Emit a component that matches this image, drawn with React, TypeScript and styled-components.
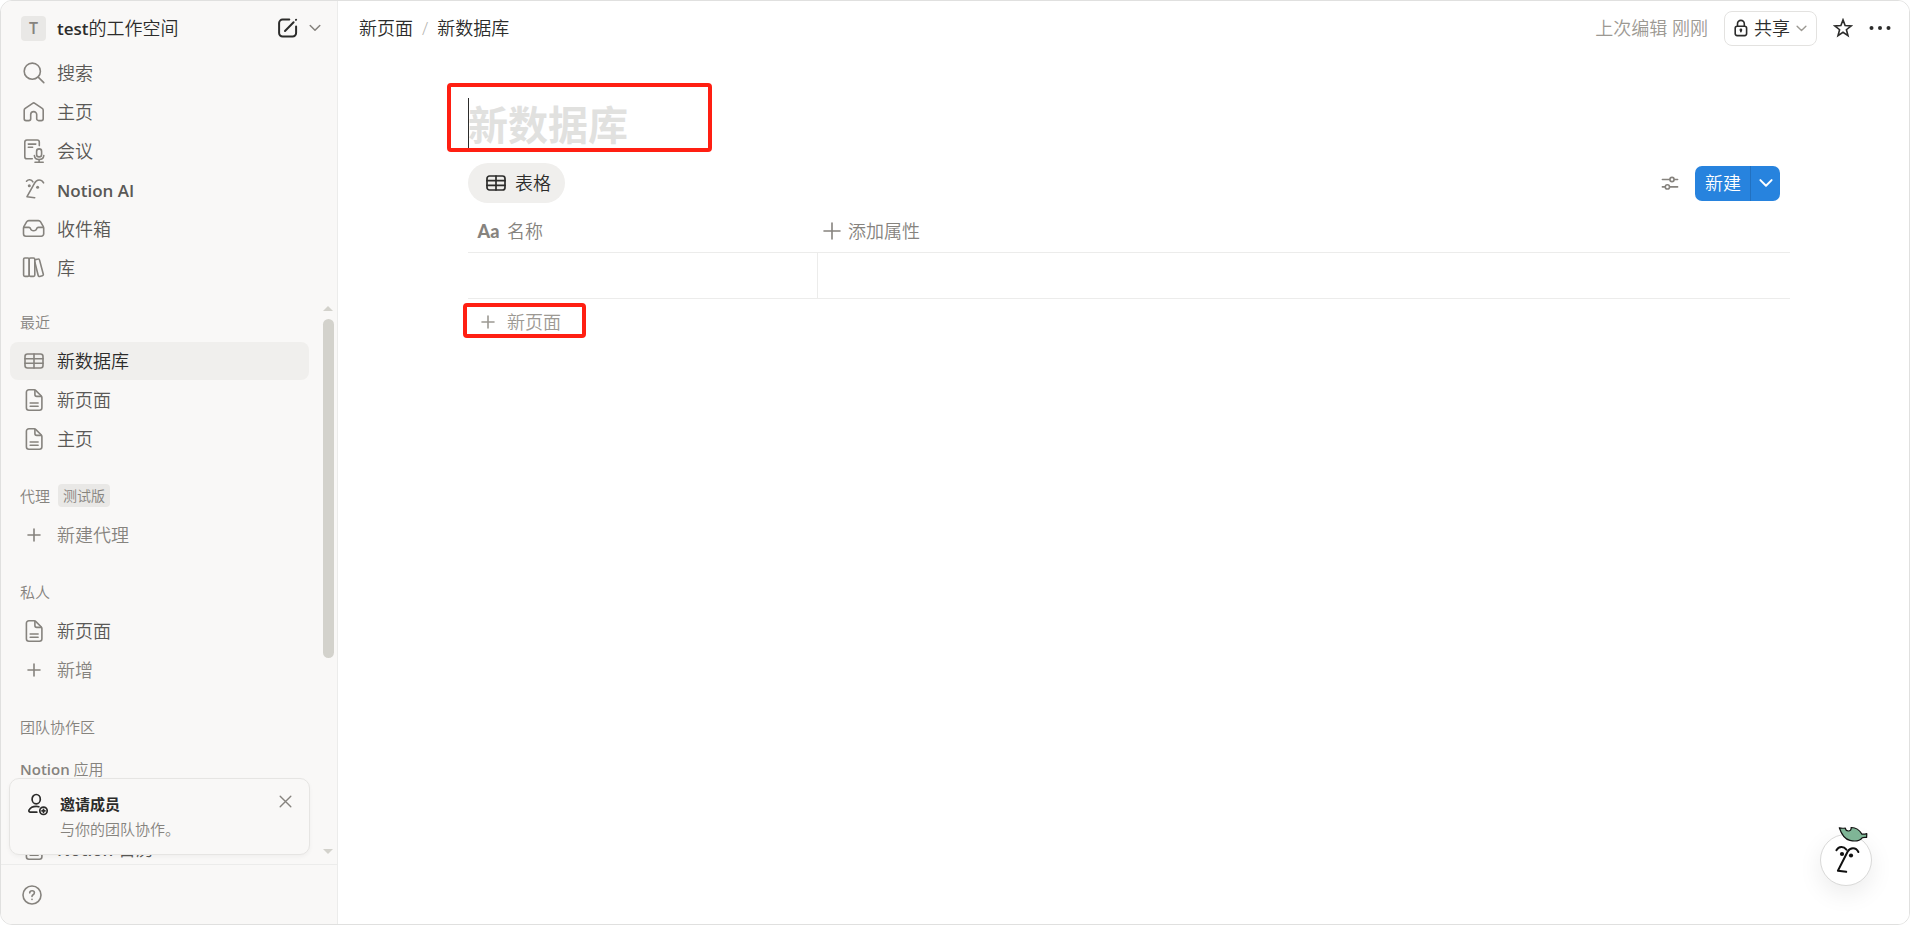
import React from "react";
import styled, { createGlobalStyle, css } from "styled-components";

const color = {
  ink: "#2c2c2b",
  body: "#5a5956",
  muted: "#86837e",
  faint: "#9c9993",
  line: "#ececeb",
  panel: "#f9f8f7",
  blue: "#2783de",
  red: "#ff1f12",
};

const GlobalStyle = createGlobalStyle`
  *, *::before, *::after { box-sizing: border-box; }
  html, body, #root { height: 100%; }
  body {
    margin: 0;
    background: #fff;
    color: ${color.ink};
    font-family: "Open Sans", "Noto Sans CJK SC", sans-serif;
    font-size: 18px;
    font-weight: 350;
    line-height: 24px;
  }
  button, input {
    font: inherit;
    color: inherit;
    border: 0;
    padding: 0;
    margin: 0;
    background: none;
  }
  button { cursor: pointer; }
  a { color: inherit; text-decoration: none; }
  svg { display: block; flex: none; }
`;

/* ---------- icons ---------- */

const Icon = styled.svg.attrs({ "aria-hidden": true })<{ $w?: number }>`
  fill: none;
  stroke: currentColor;
  stroke-width: ${(p) => p.$w ?? 1.6};
  stroke-linecap: round;
  stroke-linejoin: round;
`;

const SearchIcon = () => (
  <Icon width="24" height="24" viewBox="0 0 24 24">
    <circle cx="10.3" cy="10.2" r="8.1" />
    <path d="M16.2 16.2 21.8 21.6" />
  </Icon>
);
const HomeIcon = () => (
  <Icon width="24" height="24" viewBox="0 0 24 24">
    <path d="M2.2 10.3c0-.8.3-1.4 1-1.9l7.4-5.1c.7-.5 1.5-.5 2.2 0l7.4 5.1c.7.5 1 1.1 1 1.9v8.4a1.9 1.9 0 0 1-1.9 1.9h-2.7a1.9 1.9 0 0 1-1.9-1.9v-4.1a3 3 0 0 0-6 0v4.1a1.9 1.9 0 0 1-1.9 1.9H4.1a1.9 1.9 0 0 1-1.9-1.9z" />
  </Icon>
);
const MeetingIcon = () => (
  <Icon width="24" height="24" viewBox="0 0 24 24">
    <path d="M17.3 6.6V3.1a2.1 2.1 0 0 0-2.1-2.1H4.9a2.1 2.1 0 0 0-2.1 2.1v14.6a2.1 2.1 0 0 0 2.1 2.1h5.4M6.3 5.1h7.5M6.3 8.3h4.3" />
    <rect x="14.6" y="9.9" width="5" height="8" rx="2.5" />
    <path d="M12.4 16.6c.3 2.4 2.2 3.9 4.7 3.9s4.4-1.5 4.7-3.9M17.1 20.5v2.7M13 23.2h8.2" />
  </Icon>
);
const FaceIcon = () => (
  <Icon width="24" height="24" viewBox="0 0 24 24">
    <path d="M4.5 3.2c1.8-2.1 5-1.9 6.4.7" />
    <path d="M21.6 4.9c-2.3-3.8-6.8-3.9-9 .2L5 18.7l7.7 1" />
    <g fill="currentColor" stroke="none">
      <circle cx="7.3" cy="7.7" r="1.5" />
      <circle cx="15.6" cy="9.3" r="1.5" />
    </g>
  </Icon>
);
const InboxIcon = () => (
  <Icon width="24" height="24" viewBox="0 0 24 24">
    <path d="M1.5 11.3c0-.7.2-1.3.5-1.9l2.6-4.5c.5-.8 1.2-1.3 2.2-1.3h9.6c1 0 1.7.5 2.2 1.3l2.6 4.5c.3.6.5 1.2.5 1.9v5.5a2.4 2.4 0 0 1-2.4 2.4H3.9a2.4 2.4 0 0 1-2.4-2.4z" />
    <path d="M1.9 10.4h5c.8 0 1.4.4 1.6 1.2.4 1.4 1.5 2.2 3.1 2.2s2.7-.8 3.1-2.2c.2-.8.8-1.2 1.6-1.2h5" />
  </Icon>
);
const LibraryIcon = () => (
  <Icon width="24" height="24" viewBox="0 0 24 24">
    <rect x="1.6" y="2" width="5.6" height="18.4" rx="1.3" />
    <rect x="7.2" y="2" width="5.6" height="18.4" rx="1.3" />
    <path d="M13.3 3.7 16 3a1.2 1.2 0 0 1 1.5.9l3.8 14.3a1.2 1.2 0 0 1-.9 1.5l-2.7.7a1.2 1.2 0 0 1-1.5-.9L12.8 6" />
  </Icon>
);
const TableIcon = ({ w = 1.6 }: { w?: number }) => (
  <Icon $w={w} width="20" height="16" viewBox="0 0 20 16">
    <rect x="1" y="1" width="18" height="14" rx="2.5" />
    <path d="M1 5.7h18M1 10.3h18M10 1v14" />
  </Icon>
);
const PageIcon = () => (
  <Icon width="24" height="24" viewBox="0 0 24 24">
    <path d="M4.4 4.3a2.5 2.5 0 0 1 2.5-2.5h5.2c.7 0 1.3.3 1.8.8l5.2 5.2c.5.5.8 1.1.8 1.8v10.1a2.5 2.5 0 0 1-2.5 2.5H6.9a2.5 2.5 0 0 1-2.5-2.5z" />
    <path d="M12.9 2.3v4.3a1.8 1.8 0 0 0 1.8 1.8h4.4M8.2 15h7.9M8.2 18.3h7.9" />
  </Icon>
);
const PlusIcon = ({ size = 14 }: { size?: number }) => (
  <Icon width={size} height={size} viewBox={`0 0 ${size} ${size}`}>
    <path d={`M${size / 2} 1V${size - 1}M1 ${size / 2}H${size - 1}`} />
  </Icon>
);
const ChevronIcon = ({ size = 12, w = 1.5 }: { size?: number; w?: number }) => (
  <Icon $w={w} width={size} height={size} viewBox="0 0 12 12">
    <path d="M1.2 3.5 6 8.3l4.8-4.8" />
  </Icon>
);
const ComposeIcon = () => (
  <Icon $w={2} width="22" height="22" viewBox="0 0 22 22">
    <path d="M12.3 2.6H5.6a3.5 3.5 0 0 0-3.5 3.5v10a3.5 3.5 0 0 0 3.5 3.5h10a3.5 3.5 0 0 0 3.5-3.5V9.6" />
    <path d="M8 14 16.6 5.3M18.9 2.9l.2-.2" />
  </Icon>
);
const LockIcon = () => (
  <Icon width="14" height="18" viewBox="0 0 14 18">
    <rect x="1.2" y="7.2" width="11.4" height="9.4" rx="2" />
    <path d="M3.5 7.2V4.8a3.4 3.4 0 0 1 6.8 0v2.4M6.9 11.3v1.5" />
    <circle cx="6.9" cy="11" r=".6" />
  </Icon>
);
const StarIcon = () => (
  <Icon $w={1.6} width="20" height="20" viewBox="0 0 20 20">
    <path strokeLinejoin="miter" d="m10 1.9 2.1 5.7 6.1.3-4.8 3.8 1.6 5.9L10 14.3l-5 3.3 1.6-5.9L1.8 7.9l6.1-.3z" />
  </Icon>
);
const DotsIcon = () => (
  <Icon width="22" height="6" viewBox="0 0 22 6">
    <g fill="currentColor" stroke="none">
      <circle cx="2.5" cy="3" r="2" />
      <circle cx="11" cy="3" r="2" />
      <circle cx="19.5" cy="3" r="2" />
    </g>
  </Icon>
);
const SlidersIcon = () => (
  <Icon width="18" height="16" viewBox="0 0 18 16">
    <path d="M1.4 4.5h7.2M13.4 4.5h3.2M1.4 11.9H4M8.8 11.9h7.8" />
    <circle cx="11" cy="4.5" r="2.1" />
    <circle cx="6.4" cy="11.9" r="2.1" />
  </Icon>
);
const CloseIcon = () => (
  <Icon $w={1.4} width="13" height="13" viewBox="0 0 13 13">
    <path d="m1.2 1.2 10.6 10.6M11.8 1.2 1.2 11.8" />
  </Icon>
);
const InviteIcon = () => (
  <Icon $w={1.7} width="22" height="24" viewBox="0 0 22 24">
    <ellipse cx="9.2" cy="7.2" rx="4.1" ry="4.7" />
    <path d="M9.8 20.2H3.4c-1.2 0-1.9-1-1.4-2 1.2-2.3 4-3.8 7.2-3.8 1 0 1.9.1 2.7.4" />
    <circle cx="16.5" cy="18.8" r="3.7" />
    <path d="M16.5 17.3v3M15 18.8h3" />
  </Icon>
);
const HelpIcon = () => (
  <Icon width="20" height="20" viewBox="0 0 20 20">
    <circle cx="10" cy="10" r="9" />
    <path d="M7.7 7.9c.1-1.3 1-2.1 2.4-2.1 1.3 0 2.3.8 2.3 2 0 1-.5 1.5-1.3 2s-1.1.9-1.1 1.7" />
    <path d="M10 14.3v.1" />
  </Icon>
);

/* ---------- shell ---------- */

const Shell = styled.div`
  position: relative;
  display: flex;
  height: 100vh;
  min-height: 600px;
  border: 1px solid #e0e0df;
  border-radius: 12px;
  overflow: hidden;
`;

const Sidebar = styled.aside`
  flex: none;
  position: relative;
  display: flex;
  flex-direction: column;
  width: 337px;
  background: ${color.panel};
  border-right: 1px solid ${color.line};
  color: ${color.body};
`;

const Workspace = styled.div`
  display: flex;
  align-items: center;
  height: 53px;
  padding: 1px 16px 0 20px;
`;

const WorkspaceButton = styled.button`
  display: flex;
  align-items: center;
  gap: 11px;
  flex: 1;
  color: ${color.ink};
`;

const Avatar = styled.span`
  display: grid;
  place-items: center;
  width: 25px;
  height: 25px;
  border-radius: 4px;
  background: #e9e8e6;
  color: ${color.muted};
  font-size: 16px;
  font-weight: 600;
`;

const Latin = styled.span`
  font-size: 17px;
  font-weight: 600;
`;

const IconButton = styled.button<{ $tone?: string }>`
  display: grid;
  place-items: center;
  color: ${(p) => p.$tone ?? color.ink};
`;

const WorkspaceActions = styled.div`
  display: flex;
  align-items: center;
  gap: 10px;
`;

const List = styled.ul`
  display: grid;
  gap: 1px;
  margin: 0;
  padding: 0;
  list-style: none;
`;

const Nav = styled.nav`
  padding: 0 27px 0 9px;
`;

const rowStyle = css`
  display: flex;
  align-items: center;
  gap: 11px;
  width: 100%;
  height: 38px;
  padding: 0 12px;
  border-radius: 8px;
  text-align: left;
`;

const RowLink = styled.a<{ $active?: boolean }>`
  ${rowStyle}
  background: ${(p) => (p.$active ? "#f0efed" : "transparent")};
  color: ${(p) => (p.$active ? color.ink : "inherit")};
`;

const RowButton = styled.button`
  ${rowStyle}
  color: ${color.muted};
`;

const RowIcon = styled.span`
  display: grid;
  place-items: center;
  width: 24px;
  height: 24px;
  color: ${color.muted};
`;

const Scroller = styled.div`
  display: flex;
  flex: 1;
  min-height: 0;
  margin-top: 16px;
`;

const Sections = styled.div`
  display: flex;
  flex: 1;
  flex-direction: column;
  gap: 19px;
  padding-left: 9px;
  overflow: hidden;
`;

const Section = styled.section<{ $tight?: boolean }>`
  flex: none;
  margin-top: ${(p) => (p.$tight ? "-16px" : "0")};
`;

const SectionTitle = styled.h2`
  display: flex;
  align-items: center;
  gap: 8px;
  height: 39px;
  margin: 0;
  padding: 0 10px 2px;
  color: ${color.muted};
  font-size: 15px;
  font-weight: inherit;
`;

const SectionLatin = styled.span`
  font-weight: 600;
`;

const Tag = styled.span`
  padding: 0 5px;
  border-radius: 4px;
  background: #e9e8e6;
  font-size: 14px;
  line-height: 23px;
`;

const CoveredList = styled(List)`
  padding-top: 41px;
`;

const Scrollbar = styled.div`
  display: flex;
  flex: none;
  flex-direction: column;
  align-items: center;
  width: 28px;
  padding: 3px 2px 10px 12px;
`;

const Arrow = styled.span<{ $down?: boolean }>`
  border: 5px solid transparent;
  border-top: ${(p) => (p.$down ? "5px solid #d3d2cc" : "0")};
  border-bottom: ${(p) => (p.$down ? "0" : "5px solid #d3d2cc")};
`;

const Track = styled.div`
  flex: 1;
  width: 11px;
  margin: 8px 0;
`;

const Thumb = styled.div`
  height: 65%;
  border-radius: 6px;
  background: #d3d2cc;
`;

const Footer = styled.div`
  display: flex;
  align-items: center;
  height: 60px;
  padding: 0 21px;
  border-top: 1px solid ${color.line};
`;

const InviteCard = styled.section`
  position: absolute;
  bottom: 69px;
  left: 8px;
  display: flex;
  align-items: flex-start;
  gap: 11px;
  width: 301px;
  height: 77px;
  padding: 13px 17px 0 17px;
  border: 1px solid #e6e5e3;
  border-radius: 10px;
  background: ${color.panel};
  box-shadow: 0 2px 4px rgba(0, 0, 0, 0.04);
  color: ${color.ink};
`;

const InviteText = styled.div`
  flex: 1;
  font-size: 15px;
  line-height: 25px;

  strong { display: block; font-weight: 600; }
  p { margin: 0; color: ${color.muted}; }
`;

const CardClose = styled(IconButton)`
  padding-top: 3px;
`;

/* ---------- main ---------- */

const Main = styled.main`
  flex: 1;
  min-width: 0;
  background: #fff;
`;

const TopBar = styled.header`
  display: flex;
  align-items: center;
  justify-content: space-between;
  height: 54px;
  padding: 0 18px 0 21px;
`;

const Crumbs = styled.nav`
  display: flex;
  align-items: center;
  gap: 9px;
`;

const Slash = styled.span`
  color: #b5b3af;
`;

const TopActions = styled.div`
  display: flex;
  align-items: center;
  gap: 16px;
`;

const Edited = styled.span`
  color: ${color.faint};
`;

const ShareButton = styled.button`
  display: flex;
  align-items: center;
  gap: 6px;
  height: 35px;
  padding: 0 9px;
  border: 1px solid #e3e2e0;
  border-radius: 8px;

  svg:last-child { color: ${color.faint}; }
`;

const Content = styled.div`
  padding: 28px 119px 40px 130px;
`;

const marked = css`
  border: 4px solid ${color.red};
  border-radius: 4px;
`;

const TitleBox = styled.div`
  ${marked}
  position: relative;
  display: flex;
  align-items: center;
  width: 265px;
  height: 69px;
  margin-left: -21px;
  padding: 14px 0 0 17px;
`;

const TitleInput = styled.input`
  width: 100%;
  height: 47px;
  outline: 0;
  font-size: 40px;
  font-weight: 700;
  line-height: 47px;

  &::placeholder { color: #e1e1df; opacity: 1; }
`;

const Caret = styled.span`
  position: absolute;
  top: 11px;
  bottom: 0;
  left: 17px;
  width: 1px;
  background: ${color.ink};
`;

const ViewBar = styled.div`
  display: flex;
  align-items: center;
  justify-content: space-between;
  margin-top: 11px;
  padding-right: 10px;
`;

const ViewTab = styled.button`
  display: flex;
  align-items: center;
  gap: 9px;
  height: 40px;
  padding: 0 14px 0 18px;
  border-radius: 20px;
  background: #f0efed;
`;

const ViewActions = styled.div`
  display: flex;
  align-items: center;
  gap: 16px;
`;

const SplitButton = styled.div`
  display: flex;
  height: 35px;
  border-radius: 7px;
  background: ${color.blue};
  color: #fff;
  overflow: hidden;
`;

const NewButton = styled.button`
  padding: 0 9px 0 10px;
`;

const NewMenuButton = styled.button`
  display: grid;
  place-items: center;
  width: 30px;
  border-left: 1px solid #2271c0;
`;

const DataTable = styled.table`
  width: 100%;
  border-collapse: collapse;
  table-layout: fixed;
  margin-top: 7px;

  th {
    height: 42px;
    padding: 0;
    color: ${color.muted};
    font-weight: inherit;
    text-align: left;
  }
  th:first-child { width: 349px; }
  td { height: 46px; padding: 0; }
  tr { border-bottom: 1px solid ${color.line}; }
  td:first-child { border-right: 1px solid ${color.line}; }
`;

const HeadButton = styled.button<{ $inset: number }>`
  display: flex;
  align-items: center;
  gap: 7px;
  height: 40px;
  padding-left: ${(p) => p.$inset}px;
`;

const TypeMark = styled.span`
  width: 23px;
  font-family: Lato, sans-serif;
  font-size: 18px;
  font-weight: 900;
`;

const NewPageButton = styled.button`
  ${marked}
  display: flex;
  align-items: center;
  gap: 12px;
  width: 123px;
  height: 35px;
  margin: 4px 0 0 -5px;
  padding: 4px 0 0 14px;
  color: ${color.faint};
`;

const Assistant = styled.button`
  position: absolute;
  right: 37px;
  bottom: 38px;
  width: 52px;
  height: 52px;
  border: 1px solid #d9d9d8;
  border-radius: 50%;
  background: #fff;
  box-shadow: 0 8px 24px rgba(0, 0, 0, 0.08);

  svg { position: absolute; left: -1px; bottom: -1px; }
`;

const navItems = [
  { label: "搜索", icon: <SearchIcon /> },
  { label: "主页", icon: <HomeIcon /> },
  { label: "会议", icon: <MeetingIcon /> },
  { label: <Latin>Notion AI</Latin>, icon: <FaceIcon /> },
  { label: "收件箱", icon: <InboxIcon /> },
  { label: "库", icon: <LibraryIcon /> },
];

type RowProps = { icon: React.ReactNode; children: React.ReactNode; active?: boolean };

const LinkRow = ({ icon, children, active }: RowProps) => (
  <li>
    <RowLink href="#" $active={active}>
      <RowIcon>{icon}</RowIcon>
      <span>{children}</span>
    </RowLink>
  </li>
);

const ActionRow = ({ children }: { children: React.ReactNode }) => (
  <li>
    <RowButton type="button">
      <RowIcon><PlusIcon /></RowIcon>
      <span>{children}</span>
    </RowButton>
  </li>
);

export default function App() {
  return (
    <>
      <GlobalStyle />
      <Shell>
        <Sidebar>
          <Workspace>
            <WorkspaceButton type="button">
              <Avatar>T</Avatar>
              <span><Latin>test</Latin>的工作空间</span>
            </WorkspaceButton>
            <WorkspaceActions>
              <IconButton type="button" aria-label="新建页面"><ComposeIcon /></IconButton>
              <IconButton type="button" aria-label="更多" $tone={color.muted}><ChevronIcon /></IconButton>
            </WorkspaceActions>
          </Workspace>
          <Nav>
            <List>
              {navItems.map((item, i) => (
                <LinkRow key={i} icon={item.icon}>{item.label}</LinkRow>
              ))}
            </List>
          </Nav>
          <Scroller>
            <Sections>
              <Section>
                <SectionTitle>最近</SectionTitle>
                <List>
                  <LinkRow icon={<TableIcon />} active>新数据库</LinkRow>
                  <LinkRow icon={<PageIcon />}>新页面</LinkRow>
                  <LinkRow icon={<PageIcon />}>主页</LinkRow>
                </List>
              </Section>
              <Section>
                <SectionTitle>代理<Tag>测试版</Tag></SectionTitle>
                <List>
                  <ActionRow>新建代理</ActionRow>
                </List>
              </Section>
              <Section>
                <SectionTitle>私人</SectionTitle>
                <List>
                  <LinkRow icon={<PageIcon />}>新页面</LinkRow>
                  <ActionRow>新增</ActionRow>
                </List>
              </Section>
              <Section>
                <SectionTitle>团队协作区</SectionTitle>
              </Section>
              <Section $tight>
                <SectionTitle><span><SectionLatin>Notion</SectionLatin> 应用</span></SectionTitle>
                <CoveredList>
                  <LinkRow icon={<PageIcon />}><Latin>Notion</Latin> 日历</LinkRow>
                </CoveredList>
              </Section>
            </Sections>
            <Scrollbar aria-hidden>
              <Arrow />
              <Track><Thumb /></Track>
              <Arrow $down />
            </Scrollbar>
          </Scroller>
          <Footer>
            <IconButton type="button" aria-label="帮助" $tone={color.muted}><HelpIcon /></IconButton>
          </Footer>
          <InviteCard>
            <InviteIcon />
            <InviteText>
              <strong>邀请成员</strong>
              <p>与你的团队协作。</p>
            </InviteText>
            <CardClose type="button" aria-label="关闭" $tone={color.muted}><CloseIcon /></CardClose>
          </InviteCard>
        </Sidebar>

        <Main>
          <TopBar>
            <Crumbs>
              <a href="#">新页面</a>
              <Slash>/</Slash>
              <a href="#">新数据库</a>
            </Crumbs>
            <TopActions>
              <Edited>上次编辑 刚刚</Edited>
              <ShareButton type="button">
                <LockIcon />
                共享
                <ChevronIcon size={11} />
              </ShareButton>
              <IconButton type="button" aria-label="收藏"><StarIcon /></IconButton>
              <IconButton type="button" aria-label="更多操作"><DotsIcon /></IconButton>
            </TopActions>
          </TopBar>

          <Content>
            <TitleBox>
              <TitleInput aria-label="标题" placeholder="新数据库" />
              <Caret />
            </TitleBox>
            <ViewBar>
              <ViewTab type="button"><TableIcon w={1.7} />表格</ViewTab>
              <ViewActions>
                <IconButton type="button" aria-label="设置" $tone={color.muted}><SlidersIcon /></IconButton>
                <SplitButton>
                  <NewButton type="button">新建</NewButton>
                  <NewMenuButton type="button" aria-label="新建选项"><ChevronIcon size={14} w={1.7} /></NewMenuButton>
                </SplitButton>
              </ViewActions>
            </ViewBar>
            <DataTable>
              <thead>
                <tr>
                  <th><HeadButton type="button" $inset={9}><TypeMark>Aa</TypeMark>名称</HeadButton></th>
                  <th><HeadButton type="button" $inset={6}><PlusIcon size={18} />添加属性</HeadButton></th>
                </tr>
              </thead>
              <tbody>
                <tr><td /><td /></tr>
              </tbody>
            </DataTable>
            <NewPageButton type="button"><PlusIcon />新页面</NewPageButton>
          </Content>
        </Main>

        <Assistant type="button" aria-label="AI">
          <svg width="52" height="60" viewBox="0 0 52 60" fill="none" stroke="#111" strokeLinecap="round" strokeLinejoin="round">
            <path d="M19.3 1.8c1.7.5 3.8.6 6 .2.2 1.9 1.3 3 3.1 3 1.9 0 3-1.3 2.7-3.5 4.7-.2 8.4 2.7 10.8 6.6 1.6.2 3 .1 4.9-.5l-.2 3.8c-1.6-.2-3-.3-4.4.4-2.7 3.5-7.3 3.7-12.3 2.6-5.7-1.3-8.4-6-10.6-12.6z" fill="#7fb596" strokeWidth="1.2" />
            <g strokeWidth="2">
              <path d="M16.4 24.2c2.3-4 7.2-4.3 10-.6" />
              <path d="M38.4 26c-2.5-5-8.3-4.6-10.7-.5L17.9 44.8l8.3 1" />
            </g>
            <g fill="#111" stroke="none">
              <circle cx="22" cy="28" r="2.1" />
              <circle cx="31" cy="29.5" r="2.1" />
            </g>
          </svg>
        </Assistant>
      </Shell>
    </>
  );
}
